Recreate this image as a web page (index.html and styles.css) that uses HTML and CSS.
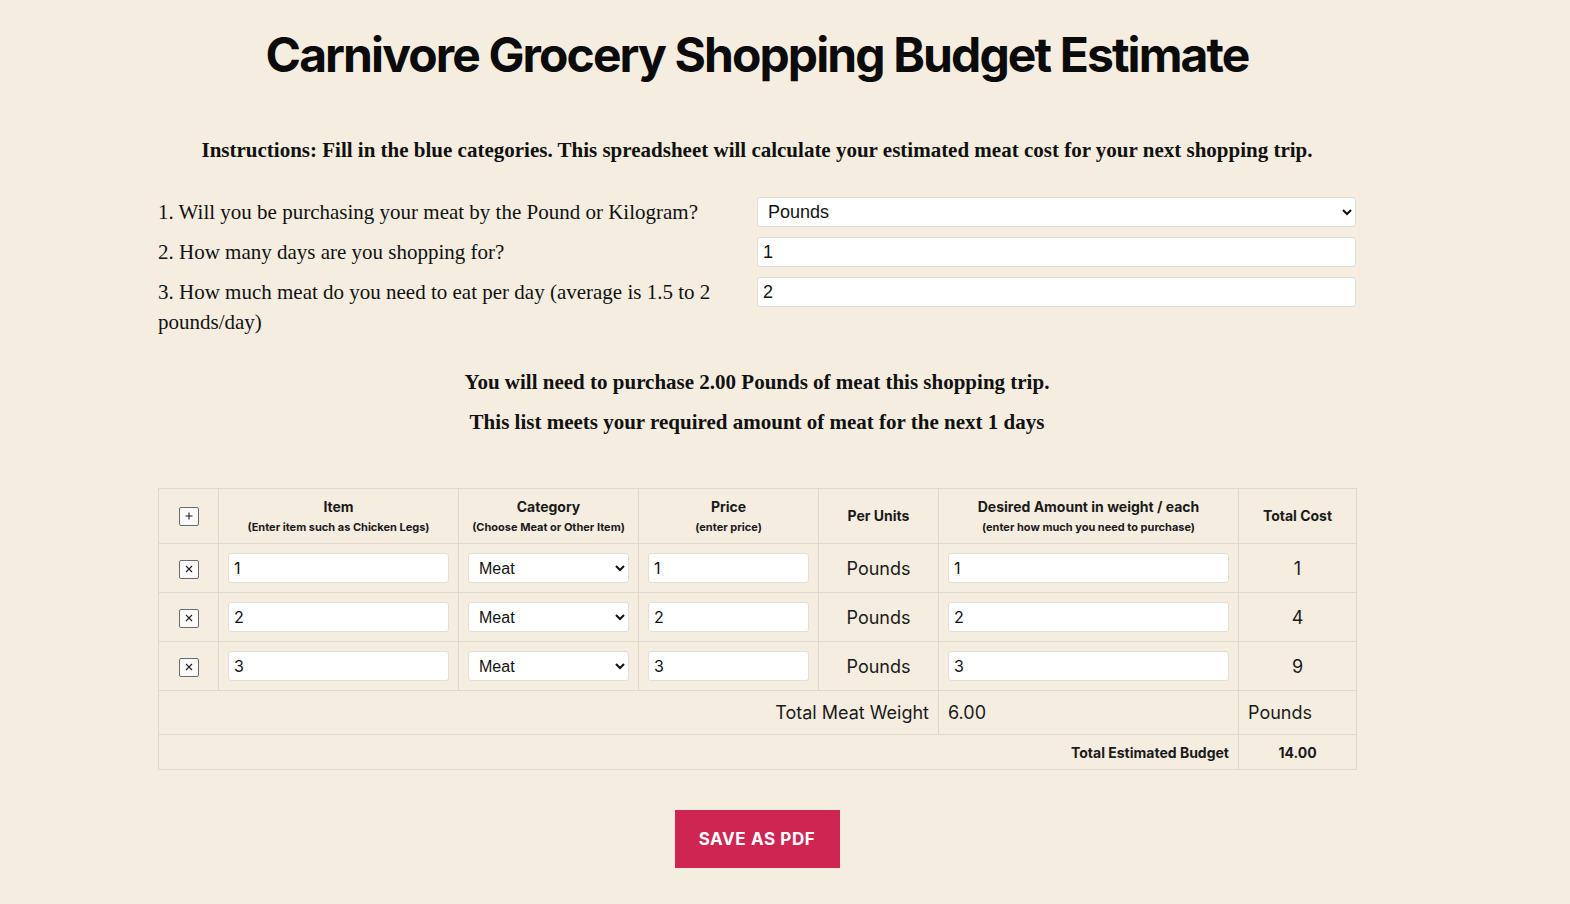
FILE: index.html
```html
<!DOCTYPE html>
<html>
<head>
<meta charset="utf-8">
<link rel="stylesheet" href="styles.css">
</head>
<body>
<main class="page">
  <h1 class="title">Carnivore Grocery Shopping Budget Estimate</h1>
  <p class="instructions">Instructions: Fill in the blue categories. This spreadsheet will calculate your estimated meat cost for your next shopping trip.</p>

  <div class="questions">
    <label class="q-label">1. Will you be purchasing your meat by the Pound or Kilogram?</label>
    <div class="q-field">
      <select class="q-select"><option>Pounds</option><option>Kilograms</option></select>
    </div>
    <label class="q-label">2. How many days are you shopping for?</label>
    <div class="q-field"><input class="q-input" type="text" value="1"></div>
    <label class="q-label">3. How much meat do you need to eat per day (average is 1.5 to 2 pounds/day)</label>
    <div class="q-field"><input class="q-input" type="text" value="2"></div>
  </div>

  <div class="summary">
    <p>You will need to purchase 2.00 Pounds of meat this shopping trip.</p>
    <p>This list meets your required amount of meat for the next 1 days</p>
  </div>

  <table class="budget">
    <colgroup>
      <col class="c-act"><col class="c-item"><col class="c-cat"><col class="c-price"><col class="c-unit"><col class="c-amt"><col class="c-total">
    </colgroup>
    <thead>
      <tr>
        <th><button class="icon-btn" type="button" aria-label="Add row"><svg viewBox="0 0 10 10" width="10" height="10"><path d="M5 1.5V8.5M1.5 5H8.5" stroke="#222" stroke-width="1.1" fill="none"/></svg></button></th>
        <th>Item<span class="sub">(Enter item such as Chicken Legs)</span></th>
        <th>Category<span class="sub">(Choose Meat or Other Item)</span></th>
        <th>Price<span class="sub">(enter price)</span></th>
        <th>Per Units</th>
        <th>Desired Amount in weight / each<span class="sub">(enter how much you need to purchase)</span></th>
        <th>Total Cost</th>
      </tr>
    </thead>
    <tbody>
      <tr>
        <td class="act"><button class="icon-btn" type="button" aria-label="Remove row"><svg viewBox="0 0 10 10" width="10" height="10"><path d="M2 2L8 8M8 2L2 8" stroke="#222" stroke-width="1.1" fill="none"/></svg></button></td>
        <td><input class="cell-input" type="text" value="1"></td>
        <td><select class="cell-select"><option>Meat</option><option>Other</option></select></td>
        <td><input class="cell-input" type="text" value="1"></td>
        <td class="center">Pounds</td>
        <td><input class="cell-input" type="text" value="1"></td>
        <td class="center">1</td>
      </tr>
      <tr>
        <td class="act"><button class="icon-btn" type="button" aria-label="Remove row"><svg viewBox="0 0 10 10" width="10" height="10"><path d="M2 2L8 8M8 2L2 8" stroke="#222" stroke-width="1.1" fill="none"/></svg></button></td>
        <td><input class="cell-input" type="text" value="2"></td>
        <td><select class="cell-select"><option>Meat</option><option>Other</option></select></td>
        <td><input class="cell-input" type="text" value="2"></td>
        <td class="center">Pounds</td>
        <td><input class="cell-input" type="text" value="2"></td>
        <td class="center">4</td>
      </tr>
      <tr>
        <td class="act"><button class="icon-btn" type="button" aria-label="Remove row"><svg viewBox="0 0 10 10" width="10" height="10"><path d="M2 2L8 8M8 2L2 8" stroke="#222" stroke-width="1.1" fill="none"/></svg></button></td>
        <td><input class="cell-input" type="text" value="3"></td>
        <td><select class="cell-select"><option>Meat</option><option>Other</option></select></td>
        <td><input class="cell-input" type="text" value="3"></td>
        <td class="center">Pounds</td>
        <td><input class="cell-input" type="text" value="3"></td>
        <td class="center">9</td>
      </tr>
    </tbody>
    <tfoot>
      <tr class="weight-row">
        <td colspan="5" class="right">Total Meat Weight</td>
        <td>6.00</td>
        <td>Pounds</td>
      </tr>
      <tr class="budget-row">
        <td colspan="6" class="right">Total Estimated Budget</td>
        <td class="center">14.00</td>
      </tr>
    </tfoot>
  </table>

  <div class="actions">
    <button class="pdf-btn" type="button">SAVE AS PDF</button>
  </div>
</main>
</body>
</html>
```

FILE: styles.css
```css
html, body {
  margin: 0;
  padding: 0;
  background: #f5eee0;
}

body {
  font-family: "Liberation Serif", "Times New Roman", serif;
  color: #111;
}

.page {
  width: 1198px;
  margin-left: 158px;
  padding-top: 24px;
  padding-bottom: 36px;
}

.title {
  font-family: Inter, "Liberation Sans", sans-serif;
  font-weight: 700;
  font-size: 48px;
  letter-spacing: -1.9px;
  line-height: 62px;
  text-align: center;
  margin: 0;
  color: #0b0b0b;
}

.instructions {
  font-weight: 700;
  font-size: 21px;
  line-height: 30px;
  text-align: center;
  margin: 49px 0 0;
}

.questions {
  display: grid;
  grid-template-columns: 599px 599px;
  row-gap: 10px;
  margin-top: 32px;
}

.q-label {
  font-size: 21px;
  line-height: 30px;
  padding-right: 40px;
}

.q-field {
  display: flex;
  align-items: flex-start;
}

.q-select, .q-input {
  box-sizing: border-box;
  width: 100%;
  height: 30px;
  border: 1px solid #dedbd4;
  border-radius: 3px;
  background: #fff;
  font-family: "Liberation Sans", Arial, sans-serif;
  font-size: 18px;
  color: #111;
  padding: 0 6px 0 5px;
  margin: 0;
}

.q-select {
  padding-left: 6px;
}

.summary {
  margin-top: 30px;
  text-align: center;
  font-weight: 700;
  font-size: 21px;
  line-height: 30px;
}

.summary p {
  margin: 0 0 10px;
}

.budget {
  width: 1198px;
  border-collapse: collapse;
  table-layout: fixed;
  margin-top: 51px;
  font-family: Inter, "Liberation Sans", sans-serif;
  color: #1a1a1a;
}

.c-act { width: 60px; }
.c-item { width: 240px; }
.c-cat { width: 180px; }
.c-price { width: 180px; }
.c-unit { width: 120px; }
.c-amt { width: 300px; }
.c-total { width: 118px; }

.budget th, .budget td {
  border: 1px solid #e0d9c9;
  padding: 0 9px;
  vertical-align: middle;
}

.budget th {
  height: 54px;
  font-size: 14px;
  font-weight: 700;
  text-align: center;
  line-height: 18px;
  padding-top: 0;
}

.budget th .sub {
  display: block;
  font-size: 11px;
  line-height: 16px;
  margin-top: 3px;
}

.budget tbody td {
  height: 48px;
  font-size: 18px;
}

.center { text-align: center; }
.right { text-align: right; }

.act { text-align: center; }

.icon-btn {
  display: inline-flex;
  align-items: center;
  justify-content: center;
  width: 20px;
  height: 19px;
  padding: 0;
  border: 1px solid #6b6b6b;
  border-radius: 2px;
  background: #fafafa;
  vertical-align: middle;
}

.cell-input, .cell-select {
  box-sizing: border-box;
  width: 100%;
  height: 30px;
  border: 1px solid #e2dfd8;
  border-radius: 3px;
  background: #fff;
  margin: 0;
  color: #111;
}

.cell-input {
  font-family: Inter, "Liberation Sans", sans-serif;
  font-size: 16px;
  padding: 0 5px;
}

.cell-select {
  font-family: "Liberation Sans", Arial, sans-serif;
  font-size: 16px;
  padding: 0 6px;
}

.weight-row td {
  height: 43px;
  font-size: 18px;
}

.budget-row td {
  height: 34px;
  font-size: 14px;
  font-weight: 700;
}

.actions {
  display: flex;
  justify-content: center;
  margin-top: 40px;
}

.pdf-btn {
  width: 165px;
  height: 58px;
  border: none;
  background: #cf2553;
  color: #fff;
  font-family: Inter, "Liberation Sans", sans-serif;
  font-weight: 700;
  font-size: 17px;
  letter-spacing: 0.6px;
  padding: 0;
}
```
